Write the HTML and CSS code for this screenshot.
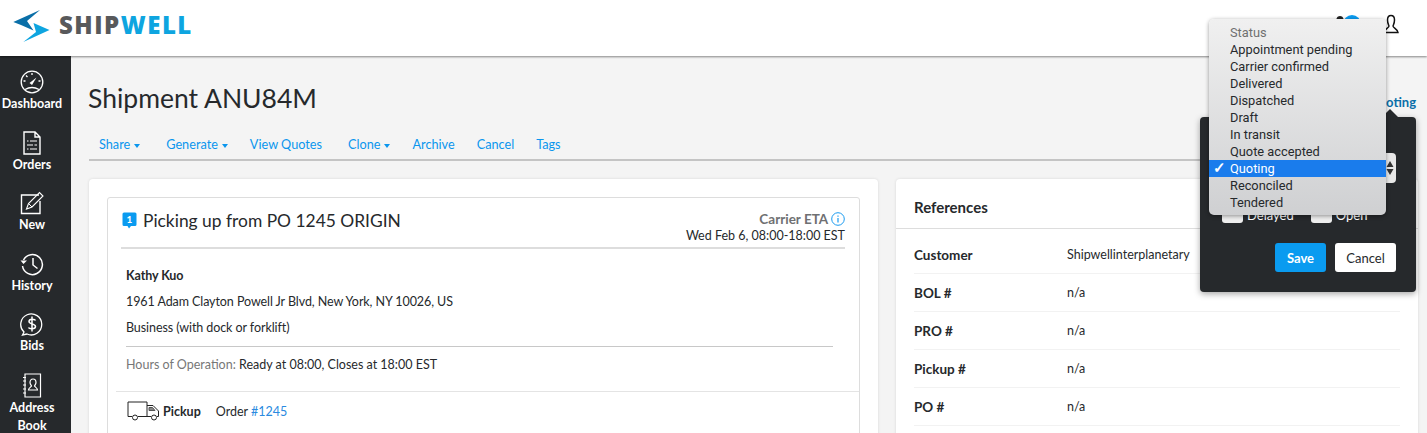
FILE: index.html
```html
<!DOCTYPE html>
<html lang="en">
<head>
<meta charset="utf-8">
<title>Shipment ANU84M</title>
<link rel="stylesheet" href="styles.css">
</head>
<body>
<header class="topbar">
  <div class="brand">
    <svg class="brand-mark" width="38" height="34" viewBox="12 9 38 34">
      <path d="M40 10 L13.300 22 L21 25 L33.500 30.500 L27 21 Z" fill="#0a6fa8"/>
      <path d="M33.500 23 L49.500 30 L23.300 42 L36 32 Z" fill="#0ea5e0"/>
    </svg>
    <span class="brand-name">SHIP<span class="brand-accent">WELL</span></span>
  </div>
  <div class="top-icons">
    <svg class="bell" width="12" height="16" viewBox="0 0 12 16"><path d="M6 1 C3 1 2 4 2 7 L1 11 H11 L10 7 C10 4 9 1 6 1Z" fill="#222"/></svg>
    <span class="badge"></span>
    <svg class="user" width="16" height="22" viewBox="0 0 16 22"><path d="M8 1.500 C5.500 1.500 4.500 3.500 4.500 6 C4.500 9 5.500 10.500 6 12 C6 14 1 15 1 18.500 L15 18.500 C15 15 10 14 10 12 C10.500 10.500 11.500 9 11.500 6 C11.500 3.500 10.500 1.500 8 1.500Z" fill="none" stroke="#111" stroke-width="1.500"/></svg>
  </div>
</header>
<div class="shell">
  <nav class="sidebar">
    <a class="side-item">
      <svg width="24" height="24" viewBox="0 0 24 24" fill="none" stroke="#fff" stroke-width="1.300"><circle cx="12" cy="12" r="10.800"/><path d="M9.500 13 L16.500 7.500 L12 15 Z" fill="#fff" stroke="none"/><path d="M5 19.500 Q12 15.500 19 19.500 M3.500 11 H5.500 M18.500 11 H20.500 M12 3 V5 M6 5.500 L7.500 7"/></svg>
      <span>Dashboard</span>
    </a>
    <a class="side-item">
      <svg width="18" height="24" viewBox="0 0 18 24" fill="none" stroke="#fff" stroke-width="1.400"><path d="M1 1 H12 L17 6 V23 H1 Z M12 1 V6 H17"/><path d="M4 10 H5.500 M7 10 H14 M4 14 H10 M11.500 14 H14 M4 18 H5.500 M7 18 H14" stroke-width="1.200"/></svg>
      <span>Orders</span>
    </a>
    <a class="side-item">
      <svg width="24" height="24" viewBox="0 0 24 24" fill="none" stroke="#fff" stroke-width="1.400"><path d="M19 4 H1.500 V22.500 H20 V10"/><path d="M6.500 18 L8.500 12.500 L19.500 1.500 L23 5 L12 16 Z" stroke-width="1.100"/><path d="M8.500 12.500 L12 16" stroke-width="1"/></svg>
      <span>New</span>
    </a>
    <a class="side-item">
      <svg width="24" height="24" viewBox="0 0 24 24" fill="none" stroke="#fff" stroke-width="1.500"><path d="M3.500 8 A10 10 0 1 1 2.500 14"/><path d="M0.500 8.500 L3.500 12 L7 8.500 Z" fill="#fff" stroke="none"/><path d="M13 6 V13 L17.500 16.500"/></svg>
      <span>History</span>
    </a>
    <a class="side-item">
      <svg width="24" height="24" viewBox="0 0 24 24" fill="none" stroke="#fff" stroke-width="1.300"><path d="M4 20 A10.500 10.500 0 1 1 7 22 L2.500 23 Z"/><path d="M15.500 8.500 C15 7 9 6.500 9 9.500 C9 12.500 15.500 11.500 15.500 14.500 C15.500 17.500 9 17 8.500 15.500 M12 4.500 V19.500" stroke-width="1.500"/></svg>
      <span>Bids</span>
    </a>
    <a class="side-item side-last">
      <svg width="20" height="25" viewBox="0 0 20 25" fill="none" stroke="#fff" stroke-width="1.200"><path d="M3 1 H18.500 V24 H3 Z"/><path d="M1 4.500 H4 M1 8 H4 M1 12 H4 M1 16 H4 M1 20 H4"/><path d="M11 6 C9 6 8 7.500 8 9.500 C8 11 9 12 9.500 13 C9 14 6.500 15 6.500 17 H15.500 C15.500 15 13 14 12.500 13 C13 12 14 11 14 9.500 C14 7.500 13 6 11 6Z"/></svg>
      <span>Address Book</span>
    </a>
  </nav>
  <main class="content">
    <div class="page-head">
      <h1 class="page-title">Shipment ANU84M</h1>
      <div class="status-line">Quoting</div>
    </div>
    <div class="action-nav">
      <a>Share<i class="caret"></i></a>
      <a class="nav-wide">Generate<i class="caret"></i></a>
      <a>View Quotes</a>
      <a class="nav-wide">Clone<i class="caret"></i></a>
      <a>Archive</a>
      <a>Cancel</a>
      <a>Tags</a>
    </div>
    <div class="columns">
      <section class="card card-left">
        <div class="stop">
          <div class="stop-head">
            <div class="stop-title">
              <svg width="15" height="17" viewBox="0 0 15 17"><path d="M2 0.500 H13 A1.500 1.500 0 0 1 14.500 2 V12.500 A1.500 1.500 0 0 1 13 14 H9 L7 16.500 L5.500 14 H2 A1.500 1.500 0 0 1 0.500 12.500 V2 A1.500 1.500 0 0 1 2 0.500Z" fill="#0a9bf0"/><text x="7.500" y="11" text-anchor="middle" class="pin-num">1</text></svg>
              <span>Picking up from PO 1245 ORIGIN</span>
            </div>
            <div class="stop-eta">
              <div class="eta-label">Carrier ETA
                <svg width="14" height="14" viewBox="0 0 14 14" fill="none" stroke="#1a9bf0"><circle cx="7" cy="7" r="6.300"/><path d="M7 6 V10.500 M7 3.500 V4.700" stroke-width="1.200"/></svg>
              </div>
              <div class="eta-date">Wed Feb 6, 08:00-18:00 EST</div>
            </div>
          </div>
          <div class="stop-body">
            <p class="contact">Kathy Kuo</p>
            <p>1961 Adam Clayton Powell Jr Blvd, New York, NY 10026, US</p>
            <p>Business (with dock or forklift)</p>
            <p class="hours"><span class="muted">Hours of Operation:</span> Ready at 08:00, Closes at 18:00 EST</p>
          </div>
          <div class="stop-foot">
            <svg width="33" height="20" viewBox="0 0 33 20" fill="none" stroke="#222" stroke-width="1"><path d="M5 15.500 H1 V1 H20 V15.500 H11 M20 4.500 H26 L31.500 10 V15.500 H30 M20 15.500 H24"/><path d="M22 6.500 H25.500 L28 9.500 H22 Z" fill="#888" stroke="#555"/><circle cx="8" cy="16.500" r="2.500"/><circle cx="27" cy="16.500" r="2.500"/></svg>
            <strong>Pickup</strong>
            <span class="order">Order <a>#1245</a></span>
          </div>
        </div>
      </section>
      <section class="card card-right">
        <h2 class="card-title">References</h2>
        <dl class="refs">
          <div class="ref"><dt>Customer</dt><dd>Shipwellinterplanetary</dd></div>
          <div class="ref"><dt>BOL #</dt><dd>n/a</dd></div>
          <div class="ref"><dt>PRO #</dt><dd>n/a</dd></div>
          <div class="ref"><dt>Pickup #</dt><dd>n/a</dd></div>
          <div class="ref"><dt>PO #</dt><dd>n/a</dd></div>
        </dl>
      </section>
    </div>
  </main>
</div>

<div class="popover">
  <span class="select-stub">
    <svg width="8" height="16" viewBox="0 0 8 16"><path d="M4 1 L7.500 7 H0.500 Z M4 15 L0.500 9 H7.500 Z" fill="#333"/></svg>
  </span>
  <div class="checks">
    <label class="check"><i></i>Delayed</label>
    <label class="check"><i></i>Open</label>
  </div>
  <div class="pop-actions">
    <button class="btn btn-save">Save</button>
    <button class="btn btn-cancel">Cancel</button>
  </div>
</div>

<ul class="native-menu">
  <li class="menu-head">Status</li>
  <li>Appointment pending</li>
  <li>Carrier confirmed</li>
  <li>Delivered</li>
  <li>Dispatched</li>
  <li>Draft</li>
  <li>In transit</li>
  <li>Quote accepted</li>
  <li class="menu-on">Quoting</li>
  <li>Reconciled</li>
  <li>Tendered</li>
</ul>
</body>
</html>
```
FILE: styles.css
```css
* { box-sizing: border-box; }
html, body { margin: 0; height: 433px; overflow: hidden; }
body { font-family: "Lato", "Open Sans", sans-serif; font-size: 13px; color: #26292c; background: #f4f4f4; position: relative; }
a { color: #0a96ee; text-decoration: none; }
p { margin: 0; }

.topbar { height: 56px; background: #fff; display: flex; justify-content: space-between; box-shadow: 0 1px 2px rgba(0,0,0,.45); position: relative; z-index: 2; }
.brand { display: flex; align-items: center; padding-left: 12px; }
.brand-mark { display: block; margin-top: -4px; }
.brand-name { font-family: "Open Sans", sans-serif; font-weight: 800; font-size: 24px; letter-spacing: 1.500px; color: #58595b; margin: -7px 0 0 9px; }
.brand-accent { color: #0ea5e0; }
.top-icons { display: flex; align-items: flex-start; padding: 14px 28px 0 0; }
.bell { margin-top: 1px; }
.badge { width: 18px; height: 18px; border-radius: 50%; background: #0a9bf0; margin: 1px 22px 0 -3px; }

.shell { display: flex; height: 377px; overflow: hidden; }
.sidebar { width: 71px; flex: none; background: #26292c; color: #fff; padding: 14px 7px 0 0; overflow: hidden; }
.side-item { height: 60.500px; display: flex; flex-direction: column; align-items: center; color: #fff; font-size: 12.500px; font-weight: 700; text-align: center; line-height: 18px; }
.side-item svg { display: block; flex: none; margin-bottom: 1px; }
.side-last span { display: block; width: 60px; }

.content { flex: 1; padding: 0 9px 0 18px; min-width: 0; }
.page-head { height: 83px; display: flex; justify-content: space-between; align-items: flex-start; }
.page-title { margin: 24px 0 0 -1px; font-weight: 400; font-size: 26.500px; line-height: 36px; color: #26292c; }
.status-line { margin: 38px 2px 0 0; font-size: 13px; font-weight: 700; color: #0a6fa8; }
.action-nav { display: flex; height: 22px; border-bottom: 2px solid #c4c4c4; padding-left: 10px; gap: 22px; margin-right: 17px; font-size: 12.700px; line-height: 11px; }
.nav-wide { margin-left: 4px; }
.caret { display: inline-block; border: 3px solid transparent; border-top: 4px solid #0a96ee; border-bottom: 0; margin-left: 4px; vertical-align: 1px; }

.columns { display: flex; gap: 18px; margin-top: 18px; }
.card { background: #fff; border-radius: 4px; box-shadow: 0 0 3px rgba(0,0,0,.12); height: 300px; }
.card-left { width: 789px; flex: none; padding: 18px; }
.card-right { flex: 1; padding: 0 18px; }

.stop { border: 1px solid #ddd; border-radius: 3px; height: 280px; }
.stop-head { margin: 0 14px 0 13px; height: 51px; border-bottom: 2px solid #ddd; display: flex; justify-content: space-between; }
.stop-title { display: flex; align-items: center; gap: 6px; font-size: 17.400px; margin: -5px 0 0 1px; }
.stop-title svg { display: block; margin-top: 1px; }
.pin-num { font-family: "Lato", sans-serif; font-size: 10px; font-weight: 700; fill: #fff; }
.stop-eta { text-align: right; padding-top: 13px; }
.eta-label { font-weight: 700; color: #6f7072; line-height: 17px; font-size: 13.500px; }
.eta-label svg { vertical-align: -2px; }
.eta-date { line-height: 15px; font-size: 12.500px; }
.stop-body { padding: 18px 26px 0 18px; font-size: 12.500px; line-height: 18px; letter-spacing: -.08px; }
.stop-body p { margin-bottom: 8px; }
.contact { font-weight: 700; }
.stop-body .hours { border-top: 1px solid #c8c8c8; margin: 9px 0 0; padding-top: 9px; letter-spacing: 0; }
.muted { color: #777; }
.stop-foot { margin: 17px 0 0 8px; border-top: 1px solid #e4e4e4; padding: 9px 0 0 11px; display: flex; align-items: center; font-size: 12.500px; }
.stop-foot strong { margin-left: 3px; }
.order { margin-left: 15px; }
.order a { color: #2a8ae0; }

.card-title { margin: 0 -18px; padding: 0 18px; height: 50px; line-height: 57px; font-size: 15px; font-weight: 700; border-bottom: 1px solid #ddd; }
.refs { margin: 0; }
.ref { display: flex; height: 38px; align-items: center; border-bottom: 1px solid #f2f2f2; }
.ref:first-child { height: 45px; padding-top: 7px; }
.ref dt { width: 153px; font-weight: 700; font-size: 13.500px; }
.ref dd { margin: 0; font-size: 12.500px; }

.popover { position: absolute; left: 1200px; top: 117px; width: 216px; height: 175px; background: #26292c; border-radius: 4px; box-shadow: 0 2px 6px rgba(0,0,0,.35); z-index: 3; }
.popover::before { content: ""; position: absolute; left: 181px; top: -8px; border: 9px solid transparent; border-top: 0; border-bottom-color: #26292c; }
.select-stub { position: absolute; left: 170px; top: 36px; width: 26px; height: 30px; background: #e8e8e8; border-radius: 4px; display: flex; align-items: center; justify-content: flex-end; padding-right: 2px; }
.checks { position: absolute; left: 22px; top: 88px; display: flex; gap: 17px; }
.check { display: flex; gap: 4px; color: #fff; font-size: 13px; line-height: 14px; align-items: flex-end; }
.check i { width: 21px; height: 18px; background: #eee; border-radius: 3px; display: block; margin-bottom: -1px; }
.pop-actions { position: absolute; right: 20px; top: 126px; display: flex; gap: 9px; }
.btn { font: 700 13px "Lato", sans-serif; height: 29px; border: 0; border-radius: 3px; padding: 0; }
.btn-save { width: 51px; background: #0a9bf0; color: #fff; }
.btn-cancel { width: 61px; background: #fff; color: #26292c; font-weight: 400; }

.native-menu { position: absolute; left: 1209px; top: 19px; width: 177px; height: 196px; margin: 0; padding: 5px 0 4px; list-style: none; background: linear-gradient(#f0f0f0, #cfd0d2); border-radius: 5px; box-shadow: 0 1px 4px rgba(0,0,0,.4); z-index: 4; font: 12.800px/17px "Roboto", sans-serif; color: #26292c; }
.native-menu li { height: 17px; padding-left: 21px; position: relative; }
.menu-head { color: #707070; }
.menu-on { background: #1a7cec; color: #fff; }
.menu-on::before { content: "\2713"; position: absolute; left: 4px; font-weight: 700; font-size: 15px; }
```
